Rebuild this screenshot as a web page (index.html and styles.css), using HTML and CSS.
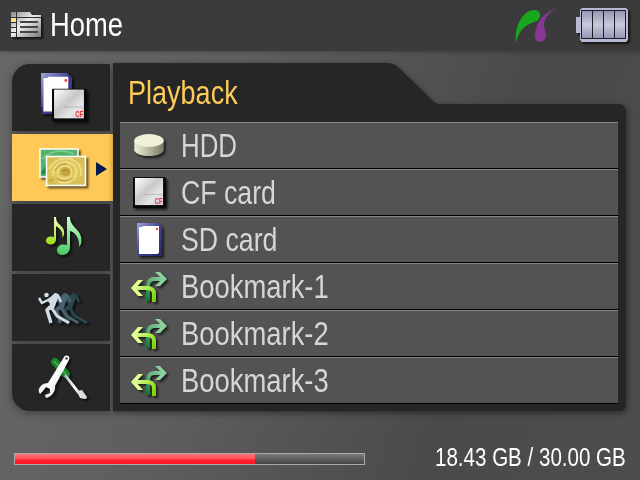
FILE: index.html
```html
<!DOCTYPE html>
<html lang="en">
<head>
<meta charset="utf-8">
<title>Home</title>
<link rel="stylesheet" href="styles.css">
</head>
<body>
<svg class="defs" width="0" height="0" aria-hidden="true">
  <defs>
    <linearGradient id="silver" x1="0" y1="0" x2="1" y2="1"><stop offset="0" stop-color="#fff"/><stop offset=".45" stop-color="#c8c8c8"/><stop offset=".7" stop-color="#e6e6e6"/><stop offset="1" stop-color="#ccc"/></linearGradient>
    <linearGradient id="folder" x1="0" y1="0" x2="1" y2="1"><stop offset="0" stop-color="#888"/><stop offset=".45" stop-color="#eee"/><stop offset="1" stop-color="#777"/></linearGradient>
    <linearGradient id="blue" x1="0" y1="0" x2="1" y2="1"><stop offset="0" stop-color="#9fa1d8"/><stop offset=".5" stop-color="#3e4193"/><stop offset="1" stop-color="#242769"/></linearGradient>
    <linearGradient id="cell" x1="0" y1="0" x2="0" y2="1"><stop offset="0" stop-color="#9296b1"/><stop offset=".5" stop-color="#c6c9dc"/><stop offset="1" stop-color="#9397b4"/></linearGradient>
    <linearGradient id="disk" x1="0" y1="0" x2="1" y2="0"><stop offset="0" stop-color="#eeeedc"/><stop offset=".5" stop-color="#b7b7a0"/><stop offset="1" stop-color="#77776a"/></linearGradient>
    <linearGradient id="lime" gradientUnits="userSpaceOnUse" x1="2" y1="10" x2="24" y2="30"><stop offset="0" stop-color="#f1ffc2"/><stop offset=".45" stop-color="#b8ee58"/><stop offset="1" stop-color="#72d000"/></linearGradient>
    <linearGradient id="mint" gradientUnits="userSpaceOnUse" x1="34" y1="2" x2="16" y2="28"><stop offset="0" stop-color="#9bd9ae"/><stop offset=".55" stop-color="#55a970"/><stop offset="1" stop-color="#087a32"/></linearGradient>
    <linearGradient id="note1" x1="0" y1="0" x2="0" y2="1"><stop offset="0" stop-color="#f3ffc8"/><stop offset="1" stop-color="#9bdc16"/></linearGradient>
    <linearGradient id="note2" x1="0" y1="0" x2="0" y2="1"><stop offset="0" stop-color="#ccffcf"/><stop offset="1" stop-color="#45c963"/></linearGradient>
    <linearGradient id="steel" x1="0" y1="0" x2="1" y2="1"><stop offset="0" stop-color="#aaa"/><stop offset=".5" stop-color="#fff"/><stop offset="1" stop-color="#bbb"/></linearGradient>
    <radialGradient id="rose"><stop offset="0" stop-color="#b79a32"/><stop offset=".5" stop-color="#e4cd62"/><stop offset="1" stop-color="#d8bf55"/></radialGradient>
    <symbol id="cf" viewBox="0 0 34 32">
      <path d="M1 0H32L34 1V30L32 32H0V1Z" fill="#080808"/>
      <rect x="2" y="1" width="29" height="28" fill="url(#silver)"/>
      <path d="M12 18H30" stroke="#aaa" stroke-width=".7"/>
      <text class="cf-text" x="22.500" y="27.800" textLength="8" lengthAdjust="spacingAndGlyphs">CF</text>
    </symbol>
    <symbol id="sd" viewBox="0 0 25 33">
      <path d="M0 0H21L25 4V33H1V28L0 27Z" fill="url(#blue)"/>
      <path d="M2 4H5L6 3H22V30L20 31H2Z" fill="#fff"/>
      <rect x="19" y="5" width="2" height="2" fill="#f33"/>
    </symbol>
    <symbol id="bookmark" viewBox="0 0 36 30">
      <path d="M17 29V14Q17 7 24 7H32" fill="none" stroke="url(#mint)" stroke-width="4"/>
      <path d="M24 0H29L36 7L29 14H24L31 7Z" fill="#8bd0a1"/>
      <path d="M23 30V22Q23 16 16 16H4" fill="none" stroke="url(#lime)" stroke-width="4"/>
      <path d="M12 8H7L0 16L7 24H12L5 16Z" fill="#dfff91"/>
    </symbol>
    <g id="runner" fill="none" stroke="currentColor" stroke-linejoin="round">
      <circle cx="8.500" cy="3" r="2.300" fill="currentColor" stroke="none"/>
      <path d="M9 8L17 1L21 3L16 17L9 19L12 12Z" fill="currentColor" stroke="none"/>
      <path d="M1 6L4 11L12 7M17 2.500L20 3.500L23 10" stroke-width="2.500"/>
      <path d="M12 15L9 18L13 31" stroke-width="3.500"/>
      <path d="M13 15L19 24L31 31" stroke-width="3"/>
    </g>
  </defs>
</svg>
<div class="screen">
  <header class="header">
    <svg class="menu-icon shadow" width="31" height="26" viewBox="0 0 31 26">
      <path d="M0 0H19L21 3H30V25H0Z" fill="url(#folder)"/>
      <rect y="6" width="5" height="4" fill="#ffdf91"/>
      <path d="M5.500 0V25M0 5.500H30M0 10.500H5M0 15.500H5M0 20.500H5" stroke="#303030"/>
      <path d="M9 10H27M9 15H27M9 20H27" stroke="#444" stroke-width="2"/>
    </svg>
    <h1 class="title"><span class="narrow home">Home</span></h1>
    <div class="status">
      <svg class="bridge" width="43" height="36" viewBox="0 0 43 36">
        <path d="M1 35C-1 17 9 2 19 2C26 2 27 9 22 13C15 16 5 17 1 35Z" fill="#18a81d"/>
        <path d="M42 .5C29 3 21 15 20 26C19 36 29 36 31 29C32 24 28 19 29 15C31 9 35 3 42 .5Z" fill="#853792"/>
      </svg>
      <svg class="shadow" width="53" height="35" viewBox="0 0 53 35">
        <path d="M0 9H4V2L6 0H50L52 2V32L50 34H6L4 32V25H0Z" fill="#b7bad3"/>
        <rect x="5.500" y="2.500" width="44" height="28" fill="url(#cell)" stroke="#1d1e26"/>
        <path d="M16.500 3V30M27.500 3V30M38.500 3V30" stroke="#1d1e26"/>
      </svg>
    </div>
  </header>
  <main class="main">
    <nav class="tabs">
      <div class="tab first">
        <svg class="tab-icon shadow" width="48" height="50" viewBox="0 0 48 50">
          <use href="#sd" x="0" y="0" width="31" height="41"/>
          <use href="#cf" x="11" y="15.500" width="35" height="33"/>
        </svg>
      </div>
      <div class="tab selected">
        <svg class="tab-icon photo shadow" width="48" height="40" viewBox="0 0 48 40">
          <rect x="1" y="1" width="38" height="28" fill="#50b469" stroke="#fff" stroke-width="1.500"/>
          <path d="M3 11Q17-2 35 6M7 20Q14 3 35 11" stroke="#7fcd90" stroke-width="1.500" fill="none"/>
          <path d="M2 25L9 14L7 27Z" fill="#218743"/>
          <rect x="7.500" y="8.500" width="39" height="29" fill="url(#rose)" stroke="#fff" stroke-width="1.600"/>
          <g fill="none" stroke="#f0df8e" stroke-width="1.500">
            <path d="M10 21Q17 8 31 11Q43 14 42 28"/>
            <path d="M14 28Q14 14 28 14Q39 16 37 28Q31 37 19 34"/>
            <path d="M19 26Q19 17 28 18Q35 21 32 28Q26 33 19 28"/>
          </g>
          <path d="M22 24Q25 20 29 22Q31 25 28 27Q24 28 23 25M16 23Q19 15 28 16M18 30Q25 36 34 30M10 33L15 31" fill="none" stroke="#a58629" stroke-width=".8"/>
        </svg>
        <svg class="arrow" width="11" height="14" viewBox="0 0 11 14"><path d="M0 0L11 7L0 14Z" fill="#001d4b"/></svg>
      </div>
      <div class="tab">
        <svg class="tab-icon music shadow" width="40" height="42" viewBox="0 0 40 42">
          <path d="M8 0H10C10 9 20 8 18 18L16 21C18 13 12 11 10 9V23C9 30-1 28 0 23C1 19 5 19 8 20Z" fill="url(#note1)"/>
          <path d="M21 0H24C24 12 38 12 35 27L33 30C34 20 28 15 24 14V31C23 40 11 40 11 33C12 27 17 27 21 28Z" fill="url(#note2)"/>
        </svg>
      </div>
      <div class="tab">
        <svg class="tab-icon sport shadow" width="50" height="33" viewBox="0 0 50 33">
          <use href="#runner" x="18" color="#2c4650"/><use href="#runner" x="9.500" color="#48636d"/><use href="#runner" color="#d0dde4"/>
        </svg>
      </div>
      <div class="tab last">
        <svg class="tab-icon tools shadow" width="50" height="46" viewBox="0 0 50 46">
          <path d="M17 7L28 19" stroke="#17832b" stroke-width="8" stroke-linecap="round"/>
          <path d="M16 6L28 19" stroke="#54b64f" stroke-width="1.500"/>
          <path d="M28 19L42 37L48 44L43 43L39 38L26 21Z" fill="url(#steel)"/>
          <path d="M39 36L44 35L49 42L48 44L42 43Z" fill="#ddd"/>
          <path d="M26 2C28-1 33 1 31 5L17 31C18 36 14 42 8 43L7 40L12 38V34L8 32L5 36L2 39C-2 34 4 28 10 28Z" fill="url(#steel)"/>
          <circle cx="28.500" cy="3.500" r="1.300" fill="#444"/>
        </svg>
      </div>
    </nav>
    <section class="panel">
      <h2 class="heading"><span class="narrow playback">Playback</span></h2>
      <ul class="list">
        <li class="row"><span class="icon-box"><svg class="shadow" width="33" height="23" viewBox="0 0 33 25"><path d="M0 7V18C3 26 29 26 32 18V7Z" fill="url(#disk)"/><ellipse cx="16" cy="7" rx="16" ry="7" fill="#f1f1d8"/></svg></span><span class="narrow hdd">HDD</span></li>
        <li class="row"><span class="icon-box"><svg class="shadow" width="33" height="31"><use href="#cf" width="33" height="31"/></svg></span><span class="narrow card">CF card</span></li>
        <li class="row"><span class="icon-box"><svg class="shadow" width="25" height="33"><use href="#sd" width="25" height="33"/></svg></span><span class="narrow card">SD card</span></li>
        <li class="row"><span class="icon-box"><svg class="shadow" width="36" height="30"><use href="#bookmark" width="36" height="30"/></svg></span><span class="narrow bookmark">Bookmark-1</span></li>
        <li class="row"><span class="icon-box"><svg class="shadow" width="36" height="30"><use href="#bookmark" width="36" height="30"/></svg></span><span class="narrow bookmark">Bookmark-2</span></li>
        <li class="row"><span class="icon-box"><svg class="shadow" width="36" height="30"><use href="#bookmark" width="36" height="30"/></svg></span><span class="narrow bookmark">Bookmark-3</span></li>
      </ul>
    </section>
  </main>
  <footer class="footer">
    <div class="meter"><div class="used"></div></div>
    <div class="capacity"><span class="narrow amount">18.43 GB / 30.00 GB</span></div>
  </footer>
</div>
</body>
</html>
```
FILE: styles.css
```css
* { box-sizing: border-box; }
body { margin: 0; font-family: "Liberation Sans", sans-serif; }
h1, h2, ul { margin: 0; padding: 0; font-weight: 400; list-style: none; }
.defs { position: absolute; }
svg { display: block; overflow: visible; flex-shrink: 0; }
.shadow { filter: drop-shadow(2px 2px 1px rgba(0, 0, 0, .65)); }
.screen {
  width: 640px; height: 480px; overflow: hidden;
  display: flex; flex-direction: column;
  background: linear-gradient(105deg, #686868 0%, #5e5e5e 35%, #4a4a4a 72%, #4d4d4d 100%);
}
.header {
  height: 51px; flex-shrink: 0; display: flex; align-items: flex-start;
  padding: 0 11px; background: #3b3b3b;
  box-shadow: 0 1px 4px rgba(0, 0, 0, .25);
}
.menu-icon { margin-top: 12px; }
.narrow { display: inline-block; transform-origin: left center; white-space: nowrap; }
.title { margin: 4px 0 0 8px; font-size: 34px; line-height: 40px; color: #fff; }
.home { transform: scaleX(.805); }
.status { margin-left: auto; display: flex; gap: 18px; padding-top: 8px; }
.cf-text { font: bold 9px "Liberation Sans", sans-serif; fill: #f12e35; }
.main { display: flex; align-items: flex-start; padding: 12px 14px 0 12px; height: 361px; flex-shrink: 0; }
.tabs {
  width: 101px; padding-top: 1px; display: flex; flex-direction: column; gap: 3px;
  filter: drop-shadow(0 2px 4px rgba(0, 0, 0, .35));
}
.tab { width: 98px; height: 67px; background: #262626; display: flex; align-items: flex-start; }
.first { border-top-left-radius: 18px; }
.last { border-bottom-left-radius: 18px; }
.selected { width: 101px; background: #ffc957; }
.tab-icon { margin: 9px 0 0 29px; }
.photo { margin: 14px 0 0 27px; }
.arrow { margin: 28px 0 0 9px; }
.music { margin: 13px 0 0 34px; }
.sport { margin: 18px 0 0 26px; }
.tools { margin: 11px 0 0 26px; }
.panel {
  width: 513px; height: 348px; padding: 0 8px 0 7px; position: relative;
  filter: drop-shadow(1px 2px 3px rgba(0, 0, 0, .45));
}
.panel::before {
  content: ""; position: absolute; inset: 0; z-index: -1; background: #262626;
  clip-path: path("M0 0H274Q281 0 286 5L321 39Q323 41 326 41H505Q513 41 513 49V341Q513 348 506 348H0Z");
}
.heading { height: 59px; padding: 9px 0 0 8px; font-size: 34px; line-height: 40px; color: #ffcb58; }
.playback { transform: scaleX(.795); }
.row {
  height: 47px; border-top: 1px solid #858585; border-bottom: 1px solid #000;
  background: #535353; display: flex; align-items: center;
  font-size: 34px; line-height: 40px; color: #d6d6d6;
}
.row .narrow { margin-top: -1px; }
.icon-box { width: 61px; display: flex; padding-right: 3px; justify-content: center; }
.hdd { transform: scaleX(.76); }
.card { transform: scaleX(.785); }
.bookmark { transform: scaleX(.806); }
.footer { display: flex; justify-content: space-between; padding: 0 13px 0 14px; height: 68px; }
.meter { width: 351px; height: 12px; margin-top: 41px; border: 1px solid #aaa; background: linear-gradient(#7a7a7a, #454545); }
.used { width: 240px; height: 100%; background: linear-gradient(#ff7078 0%, #ff5862 40%, #ff1c2b 65%, #f51a26 100%); }
.capacity { font-size: 25px; line-height: 30px; color: #fff; margin-top: 30px; width: 192px; }
.amount { transform: scaleX(.822); }
```
